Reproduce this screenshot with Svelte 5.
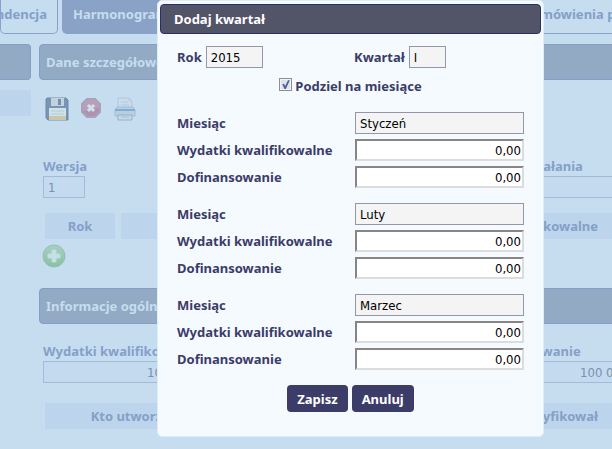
<script lang="ts">
  type Month = { name: string; expenses: string; funding: string };

  let year = $state('2015');
  let quarter = $state('I');
  let split = $state(true);
  let months: Month[] = $state([
    { name: 'Styczeń', expenses: '0,00', funding: '0,00' },
    { name: 'Luty', expenses: '0,00', funding: '0,00' },
    { name: 'Marzec', expenses: '0,00', funding: '0,00' }
  ]);
</script>

<div class="screen">
  <div class="page">
    <nav class="tabs">
      <a class="tab first" href="#korespondencja">Korespondencja</a>
      <a class="tab active" href="#harmonogram">Harmonogram płatności</a>
      <a class="tab last" href="#zamowienia">Zamówienia publiczne</a>
    </nav>

    <div class="columns">
      <aside>
        <div class="bar"></div>
        <div class="side-item"></div>
      </aside>

      <main>
        <h2 class="bar">Dane szczegółowe</h2>

        <div class="toolbar">
          <button class="icon" aria-label="Zapisz harmonogram">
            <svg width="24" height="24" viewBox="0 0 24 24">
              <path d="M2 1h19l2 2v20H3l-2-2V2z" fill="#7896b3" stroke="#6d8ba9" />
              <rect x="6" y="1" width="13" height="8" fill="#c2d3df" />
              <rect x="13" y="2" width="3" height="6" fill="#7390ab" />
              <rect x="4" y="11" width="17" height="12" fill="#d0e2e8" />
              <path d="M6 14h13M6 17h13" stroke="#b4cad7" />
              <rect x="4" y="19" width="17" height="4" fill="#cbc6ac" />
            </svg>
          </button>
          <button class="icon" aria-label="Usuń">
            <svg width="24" height="24" viewBox="0 0 24 24">
              <path d="M8 2h8l5 5v8l-5 5H8l-5-5V7z" fill="#b192ae" stroke="#a9a1bf" stroke-width="2" stroke-linejoin="round" />
              <path d="M8 3h8l4 4v4q-8 1-16 3V7z" fill="#b9a0b9" />
              <path d="M10 9l4 4M14 9l-4 4" stroke="#cfe1f1" stroke-width="3" stroke-linecap="square" />
            </svg>
          </button>
          <button class="icon" aria-label="Drukuj">
            <svg width="24" height="24" viewBox="0 0 24 24">
              <path d="M5 1h11l3 3v8H5z" fill="#c9dcec" stroke="#b0c7dc" />
              <path d="M16 1v3h3M8 5h7M8 8h8" fill="none" stroke="#b4cade" />
              <path d="M4 10h16l2 3v6H2v-6z" fill="#b8cee1" stroke="#a4bed6" />
              <path d="M2 12h20v2H2z" fill="#83acd6" />
              <path d="M5 18h14v5H5z" fill="#c6d9ea" stroke="#96b1ca" />
              <path d="M8 20h8" stroke="#a6bdd2" />
            </svg>
          </button>
        </div>

        <div class="fields">
          <div class="field">
            <label for="version">Wersja</label>
            <input id="version" class="short" value="1" readonly />
          </div>
          <div class="field">
            <label for="action">Numer działania</label>
            <input id="action" readonly />
          </div>
        </div>

        <table class="schedule">
          <thead>
            <tr><th class="year">Rok</th><th class="quarter">Kwartał</th><th class="amount">Kwalifikowalne</th></tr>
          </thead>
        </table>
        <button class="icon add" aria-label="Dodaj">
          <svg width="24" height="24" viewBox="0 0 24 24">
            <defs>
              <linearGradient id="green" x1="0" y1="0" x2="0" y2="1">
                <stop offset="0" stop-color="#a9cfc5" />
                <stop offset="1" stop-color="#88c2a0" />
              </linearGradient>
            </defs>
            <circle cx="12" cy="12" r="11" fill="url(#green)" stroke="#8fbfb5" />
            <path d="M10 6h4v4h4v4h-4v4h-4v-4H6v-4h4z" fill="#c6dfe8" stroke="#bcdcdb" stroke-linejoin="round" />
          </svg>
        </button>

        <h2 class="bar">Informacje ogólne</h2>

        <div class="fields totals">
          <div class="field">
            <label for="total">Wydatki kwalifikowalne</label>
            <input id="total" class="sum" value="100 000,00" readonly />
          </div>
          <div class="field">
            <label for="funding">Dofinansowanie</label>
            <input id="funding" class="sum" value="100 000,00" readonly />
          </div>
        </div>

        <table class="schedule">
          <thead>
            <tr><th class="author">Kto utworzył</th><th class="amount">Kto zmodyfikował</th></tr>
          </thead>
        </table>
      </main>
    </div>
  </div>

  <div class="overlay">
    <form class="dialog" role="dialog" aria-labelledby="title" onsubmit={(e) => e.preventDefault()}>
      <h1 id="title">Dodaj kwartał</h1>

      <div class="period">
        <div class="pair">
          <label for="year">Rok</label>
          <input id="year" class="locked year-input" bind:value={year} readonly />
        </div>
        <div class="pair">
          <label for="quarter">Kwartał</label>
          <input id="quarter" class="locked quarter-input" bind:value={quarter} readonly />
        </div>
      </div>

      <div class="split">
        <input id="split" type="checkbox" bind:checked={split} />
        <label for="split">Podziel na miesiące</label>
      </div>

      {#if split}
        <div class="months">
          {#each months as month, i}
            <div class="month">
              <label for="name-{i}">Miesiąc</label>
              <input id="name-{i}" class="locked" bind:value={month.name} readonly />
              <label for="expenses-{i}">Wydatki kwalifikowalne</label>
              <input id="expenses-{i}" class="money" bind:value={month.expenses} />
              <label for="funding-{i}">Dofinansowanie</label>
              <input id="funding-{i}" class="money" bind:value={month.funding} />
            </div>
          {/each}
        </div>
      {/if}

      <div class="actions">
        <button type="submit">Zapisz</button>
        <button type="button">Anuluj</button>
      </div>
    </form>
  </div>
</div>

<style>
  :global(body) {
    background: #c6ddf0;
  }

  .screen,
  .screen * {
    box-sizing: border-box;
  }

  .screen {
    position: relative;
    min-height: 100vh;
    overflow: hidden;
    font: bold 13px/16px 'Noto Sans', Tahoma, sans-serif;
    color: #3b3c68;
  }

  input,
  button {
    font: inherit;
    margin: 0;
  }

  input {
    height: 22px;
    min-width: 0;
    font-family: 'DejaVu Sans Condensed', Tahoma, sans-serif;
    font-weight: normal;
    border-radius: 0;
    outline: none;
  }

  h1,
  h2 {
    margin: 0;
    font-size: 13px;
  }

  /* dimmed page */
  .page {
    margin-right: -48px;
    color: #84a0c8;
  }

  .tabs {
    display: flex;
    gap: 4px;
    height: 34px;
  }

  .tab {
    display: flex;
    align-items: center;
    padding: 0 10px 6px;
    border: 1px solid #89a2c9;
    border-top: 0;
    border-radius: 0 0 5px 5px;
    color: inherit;
    text-decoration: none;
    white-space: nowrap;
  }

  .first {
    justify-content: flex-end;
    width: 58px;
  }

  .active {
    flex: 1;
    background: #89a2c5;
    color: #c6ddf0;
  }

  .last {
    width: 146px;
  }

  .columns {
    display: flex;
    gap: 8px;
    margin-top: 10px;
  }

  aside {
    width: 31px;
  }

  main {
    flex: 1;
    min-width: 0;
  }

  .bar {
    height: 36px;
    padding: 9px 6px;
    border: 1px solid #849fc6;
    border-radius: 4px;
    background: #92aac3;
    color: #c6ddf0;
  }

  aside .bar {
    border-left: 0;
    border-radius: 0 4px 4px 0;
  }

  .side-item {
    height: 26px;
    margin-top: 10px;
    background: #bdd4ed;
  }

  .toolbar {
    display: flex;
    gap: 10px;
    padding: 17px 6px 0;
  }

  .icon {
    display: block;
    padding: 0;
    border: 0;
    background: none;
  }

  .icon svg {
    display: block;
  }

  .fields {
    display: grid;
    grid-template-columns: 1fr 180px;
    gap: 30px;
    margin: 37px 4px 0;
  }

  .field {
    display: flex;
    flex-direction: column;
    gap: 2px;
  }

  .field input {
    padding: 0 4px;
    border: 1px solid #a4bbd7;
    background: #c4daee;
    color: #7b90ae;
  }

  .field .short {
    width: 42px;
  }

  .field .sum {
    padding-right: 8px;
    text-align: right;
  }

  .totals {
    margin-top: 19px;
  }

  .totals .field:first-child input {
    width: 180px;
  }

  .schedule {
    width: 100%;
    margin-top: 9px;
    border-spacing: 6px;
    table-layout: fixed;
  }

  .schedule th {
    height: 26px;
    padding: 0;
    background: #bdd4ed;
    white-space: nowrap;
  }

  .year {
    width: 70px;
  }

  .author {
    width: 174px;
  }

  .schedule .amount {
    padding-right: 56px;
    text-align: right;
  }

  .add {
    margin: -1px 3px 20px;
  }

  .totals + .schedule {
    margin-top: 14px;
  }

  /* dialog */
  .overlay {
    position: absolute;
    inset: 0;
    padding: 0 68px 12px 157px;
  }

  .dialog {
    padding: 3px 2px 24px;
    border: 1px solid #dcecf9;
    border-radius: 5px;
    background: #f5faff;
  }

  h1 {
    height: 30px;
    padding: 6px 13px;
    border: 1px solid #2c2d69;
    border-radius: 4px;
    background: #525468;
    color: #fff;
  }

  .period {
    display: grid;
    grid-template-columns: 177px 1fr;
    padding: 12px 17px 0;
  }

  .pair {
    display: flex;
    align-items: center;
    gap: 4px;
  }

  .locked {
    padding: 0 4px;
    border: 1px solid #9596ab;
    background: #f4f4f4;
    color: #000;
  }

  .year-input {
    width: 57px;
  }

  .quarter-input {
    width: 37px;
  }

  .split {
    display: flex;
    justify-content: center;
    gap: 3px;
    padding-top: 10px;
  }

  .split input {
    appearance: none;
    width: 13px;
    height: 13px;
    border: 1px solid #8e8f8f;
    background: #dfe3e9;
    box-shadow: inset 0 0 0 1px #f4f4f4;
  }

  .split input:checked::before {
    content: '';
    display: block;
    width: 11px;
    height: 11px;
    background: #4a5f97;
    clip-path: polygon(18% 48%, 32% 44%, 44% 64%, 70% 12%, 86% 12%, 50% 90%, 38% 90%);
  }

  .months {
    display: flex;
    flex-direction: column;
    gap: 15px;
    padding: 18px 17px 0;
  }

  .month {
    display: grid;
    grid-template-columns: 178px 1fr;
    align-items: center;
    row-gap: 5px;
  }

  .money {
    padding: 0 1px;
    border: 2px solid;
    border-color: #868686 #dcdcdc #dcdcdc #868686;
    background: #fff;
    color: #000;
    text-align: right;
  }

  .actions {
    display: flex;
    justify-content: center;
    gap: 4px;
    padding-top: 15px;
  }

  .actions button {
    height: 27px;
    padding: 0 10px;
    border: 0;
    border-radius: 4px;
    background: #3b3c68;
    color: #fff;
  }
</style>
